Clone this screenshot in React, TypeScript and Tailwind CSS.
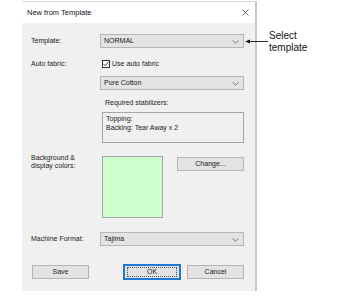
import React from "react";

const Chevron = () => (
  <svg width="7" height="4" viewBox="0 0 7 4" className="absolute right-[4px] top-[5px]">
    <path d="M0.5 0.5 L3.5 3.2 L6.5 0.5" fill="none" stroke="#6d6d6d" strokeWidth="0.9" />
  </svg>
);

const Combo = ({ text }: { text: string }) => (
  <div className="relative h-[14px] w-[144px] border border-[#b5b5b5] bg-[#e3e3e3] pl-[3px] leading-[12px] text-[#1a1a1a]">
    {text}
    <Chevron />
  </div>
);

const Btn = ({ children, w, focus }: { children: React.ReactNode; w: string; focus?: boolean }) => (
  <div
    className={`flex h-[14px] items-center justify-center bg-[#e3e3e3] ${w} ${
      focus ? "border border-[#1f7ad1] outline outline-1 outline-[#1f7ad1]" : "border border-[#b5b5b5]"
    }`}
  >
    {focus ? (
      <div className="flex h-[10px] w-[calc(100%-4px)] items-center justify-center border border-dotted border-[#555]">
        {children}
      </div>
    ) : (
      children
    )}
  </div>
);

export default function App() {
  return (
    <div
      className="relative h-[307px] w-[349px] overflow-hidden bg-white text-[7px] text-[#222]"
      style={{ fontFamily: '"Liberation Sans", Arial, sans-serif' }}
    >
      <div className="ml-[22px] mt-[1px] flex h-[290px] w-[235px] flex-col border-r-2 border-t border-r-[#c8c8c8] border-t-[#d9d9d9]">
        <div className="relative flex h-[21px] items-center bg-white pl-[5px] text-[7.5px] text-[#111]">
          New from Template
          <svg width="7" height="7" viewBox="0 0 7 7" className="absolute right-[6px] top-[7px]">
            <path d="M0.5 0.5 L6.5 6.5 M6.5 0.5 L0.5 6.5" stroke="#444" strokeWidth="0.8" />
          </svg>
        </div>
        <div className="flex flex-1 flex-col bg-[#f0f0f0] pl-[9px] pt-[11px]">
          <div className="flex h-[14px] items-center">
            <div className="w-[69px]">Template:</div>
            <Combo text="NORMAL" />
          </div>
          <div className="mt-[11px] flex h-[10px] items-center">
            <div className="w-[71px]">Auto fabric:</div>
            <div className="flex items-center">
              <div className="relative h-[8px] w-[8px] border border-[#333] bg-white">
                <svg width="6" height="6" viewBox="0 0 6 6" className="absolute left-0 top-0">
                  <path d="M0.6 3 L2.3 4.8 L5.5 0.6" fill="none" stroke="#222" strokeWidth="0.8" />
                </svg>
              </div>
              <span className="ml-[2px]">Use auto fabric</span>
            </div>
          </div>
          <div className="mt-[7px] flex h-[14px] items-center">
            <div className="w-[69px]" />
            <Combo text="Pure Cotton" />
          </div>
          <div className="mt-[8px] flex h-[10px] items-center">
            <div className="w-[74px]" />
            Required stabilizers:
          </div>
          <div className="mt-[4px] flex">
            <div className="w-[71px]" />
            <div className="h-[31px] w-[142px] border border-[#a6a6a6] pl-[3px] pt-[1px] leading-[9px]">
              <div>Topping:</div>
              <div>Backing: Tear Away x 2</div>
            </div>
          </div>
          <div className="mt-[13px] flex">
            <div className="w-[71px] pt-[-1px] leading-[8px]">
              <div className="-mt-[2px]">Background &amp;</div>
              <div>display colors:</div>
            </div>
            <div className="h-[62px] w-[61px] border border-[#a6a6a6] bg-[#ccffcc]" />
            <div className="ml-[14px] mt-[1px]">
              <Btn w="w-[67px]">Change...</Btn>
            </div>
          </div>
          <div className="mt-[14px] flex h-[14px] items-center">
            <div className="w-[69px]">Machine Format:</div>
            <Combo text="Tajima" />
          </div>
          <div className="mt-[19px] flex items-center">
            <div className="ml-[1px]">
              <Btn w="w-[57px]">Save</Btn>
            </div>
            <div className="ml-[35px]">
              <Btn w="w-[56px]" focus>
                OK
              </Btn>
            </div>
            <div className="ml-[7px]">
              <Btn w="w-[57px]">Cancel</Btn>
            </div>
          </div>
        </div>
      </div>
      <div className="absolute left-[245px] top-[39px] flex items-center">
        <svg width="24" height="5" viewBox="0 0 24 5">
          <path d="M0 2.5 L5 0.5 L5 4.5 Z" fill="#111" />
          <path d="M4 2.5 L23 2.5" stroke="#111" strokeWidth="0.9" />
        </svg>
      </div>
      <div className="absolute left-[269px] top-[30px] text-[10px] leading-[12px] text-[#111]">
        <div>Select</div>
        <div>template</div>
      </div>
    </div>
  );
}
